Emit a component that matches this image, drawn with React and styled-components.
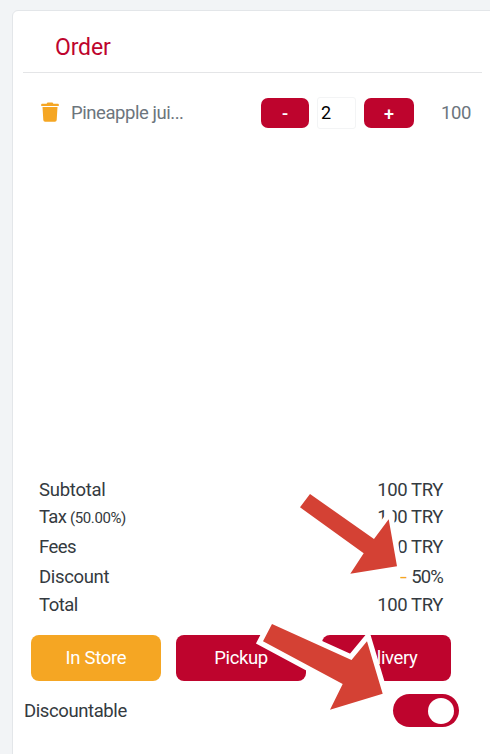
import React from "react";
import styled, { createGlobalStyle } from "styled-components";

const GlobalStyle = createGlobalStyle`
  * { box-sizing: border-box; }
  body {
    margin: 0;
    background: #f2f4f6;
    font-family: Roboto, "Open Sans", sans-serif;
    font-size: 18.5px;
    color: #343a40;
  }
`;

const Page = styled.main`
  position: relative;
  height: 754px;
  overflow: hidden;
  padding: 10px 0 0 12px;
`;

const Card = styled.section`
  height: 760px;
  width: 490px;
  background: #fff;
  border: 1px solid #e3e6e9;
  border-radius: 6px;
  display: flex;
  flex-direction: column;
`;

const Header = styled.header`
  width: 459px;
  height: 62px;
  margin-left: 10px;
  padding-left: 32px;
  border-bottom: 1px solid #e4e5e7;
  color: #be042d;
  font-size: 23px;
  line-height: 74px;
  letter-spacing: -0.15px;
`;

const ItemRow = styled.div`
  display: flex;
  align-items: center;
  height: 32px;
  margin: 24px 0 0 28px;
  color: #6c757d;
`;

const TrashIcon = styled.svg`
  width: 18px;
  height: 20px;
  margin-top: -2px;
`;

const ItemName = styled.span`
  width: 202px;
  padding-left: 12px;
  line-height: 30px;
  letter-spacing: ${(p) => p.$spacing}px;
`;

const StepButton = styled.button`
  width: ${(p) => p.$width}px;
  height: 30px;
  border: 0;
  border-radius: 7px;
  padding: 1px 0 0;
  background: #be042d;
  color: #fff;
  font: 500 18px Roboto, sans-serif;
`;

const Quantity = styled.input`
  width: 39px;
  height: 32px;
  margin: 0 8px;
  padding: 0 0 2px 3px;
  border: 1px solid #f3f4f5;
  border-radius: 3px;
  color: #000;
  font: 18px Roboto, sans-serif;
  outline: none;
`;

const ItemPrice = styled.span`
  margin-left: 27px;
  letter-spacing: -0.4px;
`;

const Totals = styled.dl`
  display: grid;
  grid-template-rows: 27px 27px 33px 27px 29px;
  width: 404px;
  margin: 347px 0 0 26px;
`;

const TotalRow = styled.div`
  display: flex;
  justify-content: space-between;
  align-items: center;
`;

const Label = styled.dt`
  letter-spacing: ${(p) => p.$spacing}px;
`;

const Rate = styled.small`
  font-size: 15px;
  letter-spacing: -0.4px;
`;

const Amount = styled.dd`
  display: flex;
  align-items: center;
  margin: 0;
  letter-spacing: ${(p) => (p.$discount ? -0.9 : -0.4)}px;
`;

const Minus = styled.span`
  display: inline-block;
  margin-right: 5px;
  color: #f5a623;
  letter-spacing: 0;
  transform: scaleX(1.35);
`;

const OrderTypes = styled.div`
  display: grid;
  grid-template-columns: 130px 130px 129px;
  column-gap: 15px;
  margin: 16px 0 0 18px;
`;

const TypeButton = styled.button`
  height: 46px;
  border: 0;
  border-radius: 8px;
  padding: 0;
  background: ${(p) => (p.$active ? "#f5a623" : "#be042d")};
  color: #fff;
  font: 18.5px Roboto, sans-serif;
  letter-spacing: ${(p) => (p.$active ? -0.3 : -0.4)}px;

  &:last-child {
    margin: 0 -1px 0 1px;
  }
`;

const DiscountRow = styled.div`
  display: flex;
  justify-content: space-between;
  align-items: center;
  width: 435px;
  height: 33px;
  margin: 13px 0 0 11px;
`;

const Switch = styled.div`
  display: flex;
  justify-content: flex-end;
  align-items: center;
  width: 66px;
  height: 33px;
  padding-right: 5px;
  border-radius: 17px;
  background: #be042d;
`;

const Knob = styled.span`
  width: 26px;
  height: 26px;
  border-radius: 50%;
  background: #fff;
`;

const Pointers = styled.svg`
  position: absolute;
  inset: 0;
  pointer-events: none;
`;

const Arrow = styled.polygon`
  fill: #d44134;
  stroke: #fff;
  stroke-width: 10.5px;
  stroke-linejoin: miter;
  paint-order: stroke;
`;

const totals = [
  { label: "Subtotal", amount: "100 TRY", spacing: -0.25 },
  { label: "Tax", rate: "(50.00%)", amount: "100 TRY", spacing: -0.7 },
  { label: "Fees", amount: "0 TRY", spacing: -0.55 },
  { label: "Discount", amount: "50%", discount: true, spacing: -0.35 },
  { label: "Total", amount: "100 TRY", spacing: -0.5 },
];

export default function App() {
  return (
    <Page>
      <GlobalStyle />
      <Card>
        <Header>Order</Header>
        <ItemRow>
          <TrashIcon viewBox="0 0 18 20" fill="#f5a623">
            <path d="M1 1.7h4.6l.9-1.2h5l.9 1.2H17q.8 0 .8.8v1.5H.2V2.5q0-.8.8-.8Z" />
            <path d="M1.5 5h15l-.8 13q-.1 1.7-1.8 1.7H4.1q-1.7 0-1.8-1.7Z" />
          </TrashIcon>
          <ItemName $spacing={-0.45}>Pineapple jui...</ItemName>
          <StepButton $width={48}>-</StepButton>
          <Quantity defaultValue="2" aria-label="Quantity" />
          <StepButton $width={50}>+</StepButton>
          <ItemPrice>100</ItemPrice>
        </ItemRow>
        <Totals>
          {totals.map((t) => (
            <TotalRow key={t.label}>
              <Label $spacing={t.spacing}>
                {t.label} {t.rate && <Rate>{t.rate}</Rate>}
              </Label>
              <Amount $discount={t.discount}>
                {t.discount && <Minus>-</Minus>}
                {t.amount}
              </Amount>
            </TotalRow>
          ))}
        </Totals>
        <OrderTypes>
          <TypeButton $active>In Store</TypeButton>
          <TypeButton>Pickup</TypeButton>
          <TypeButton>Delivery</TypeButton>
        </OrderTypes>
        <DiscountRow>
          <Label $spacing={-0.4}>Discountable</Label>
          <Switch role="switch" aria-checked="true">
            <Knob />
          </Switch>
        </DiscountRow>
      </Card>
      <Pointers width="490" height="754" viewBox="0 0 490 754">
        <Arrow points="310,494 300,507.3 363.7,553.3 350.3,573.7 397,566.3 388.7,519.3 374,539" />
        <Arrow points="272,624 263,641.3 342.7,684 330,709.7 382.7,693.7 367,641.3 351.5,660" />
      </Pointers>
    </Page>
  );
}
